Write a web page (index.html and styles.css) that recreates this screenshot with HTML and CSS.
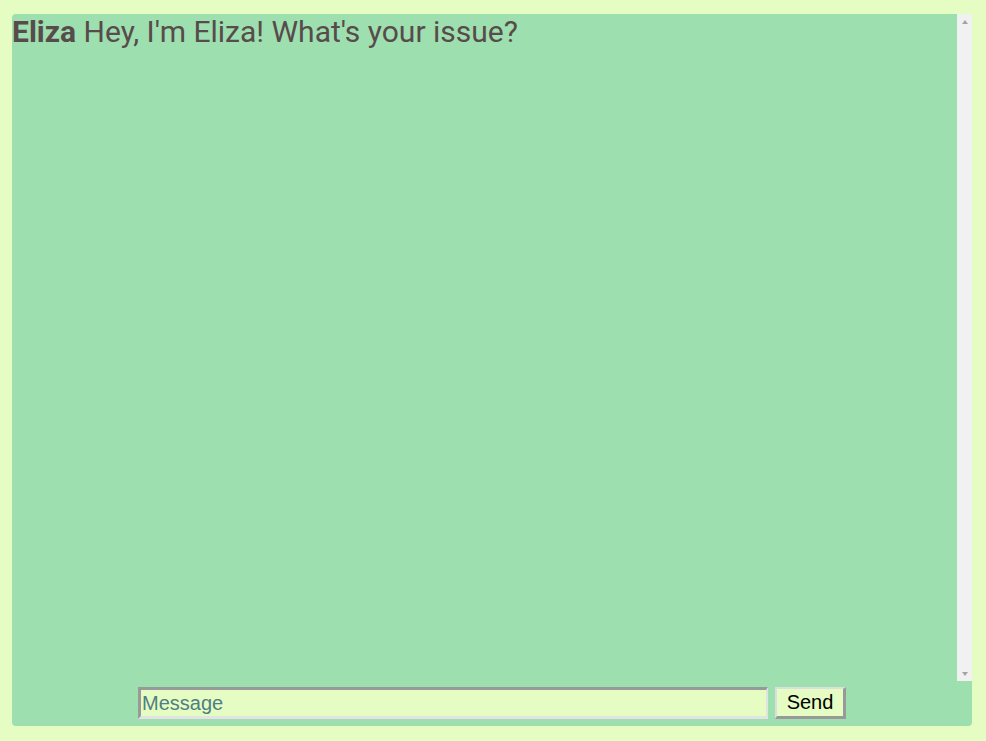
FILE: index.html
```html
<!DOCTYPE html>
<html>
<head>
<meta charset="utf-8">
<link rel="stylesheet" href="styles.css">
</head>
<body>
<div class="chat">
  <div class="log">
    <div class="messages">
      <p class="msg"><b class="who">Eliza</b> Hey, I'm Eliza! What's your issue?</p>
    </div>
    <div class="scrollbar" aria-hidden="true">
      <span class="arrow up"></span>
      <span class="track"></span>
      <span class="arrow down"></span>
    </div>
  </div>
  <form class="composer">
    <input class="field" type="text" placeholder="Message">
    <button class="send" type="button">Send</button>
  </form>
</div>
</body>
</html>
```
FILE: styles.css
```css
html, body {
  margin: 0;
  height: 100%;
  background: #e5fcc3;
}
body {
  padding: 14px 14px 15px 12px;
  box-sizing: border-box;
}
.chat {
  width: 960px;
  height: 712px;
  background: #9ddfae;
  border-radius: 4px;
  display: flex;
  flex-direction: column;
}
.log {
  height: 667px;
  display: flex;
}
.messages {
  flex: 1;
  overflow: hidden;
}
.scrollbar {
  width: 15px;
  background: #f1f1f1;
  display: flex;
  flex-direction: column;
  align-items: center;
}
.track { flex: 1; }
.arrow {
  width: 0;
  height: 0;
  border-left: 3.5px solid transparent;
  border-right: 3.5px solid transparent;
}
.arrow.up {
  margin-top: 6px;
  border-bottom: 4px solid #a3a3a3;
}
.arrow.down {
  margin-bottom: 5px;
  border-top: 4px solid #a3a3a3;
}
.msg {
  margin: 0;
  font-family: Roboto, sans-serif;
  font-size: 30px;
  line-height: 36px;
  color: #584b4b;
}
.who { font-weight: 700; }
.composer {
  margin: 6px 0 0;
  display: flex;
  justify-content: center;
  gap: 7px;
}
.field {
  width: 630px;
  height: 32px;
  box-sizing: border-box;
  background: #e5fcc3;
  border-style: solid;
  border-width: 3px 2px 3px 3px;
  border-color: #999 #e3e3e3 #e3e3e3 #999;
  font-family: "Liberation Sans", Arial, sans-serif;
  font-size: 20px;
  padding: 0 1px;
  margin: 0;
}
.field::placeholder { color: #4f7f82; }
.send {
  width: 71px;
  height: 32px;
  box-sizing: border-box;
  background: #e5fcc3;
  border-style: solid;
  border-width: 2px 3px 3px 2px;
  border-color: #ddd #999 #999 #ddd;
  font-family: "Liberation Sans", Arial, sans-serif;
  font-size: 20px;
  color: #000;
  padding: 0;
  margin: 0;
}
```
